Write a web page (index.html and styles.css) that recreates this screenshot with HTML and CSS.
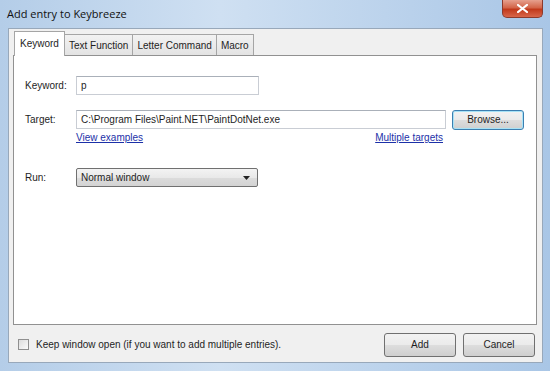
FILE: index.html
```html
<!DOCTYPE html>
<html lang="en">
<head>
    <meta charset="UTF-8">
    <title>Add entry to Keybreeze</title>
    <link rel="stylesheet" href="styles.css">
</head>
<body>
    <div class="window">
        <div class="titlebar">
            <span class="title">Add entry to Keybreeze</span>
            <div class="close-btn">
                <svg width="11" height="9" viewBox="0 0 11 9"><path d="M1 1 L10 8 M10 1 L1 8" stroke="#fff" stroke-width="2.2" stroke-linecap="square"/></svg>
            </div>
        </div>
        <div class="client">
            <div class="tabs">
                <div class="tab active">Keyword</div>
                <div class="tab">Text Function</div>
                <div class="tab">Letter Command</div>
                <div class="tab">Macro</div>
            </div>
            <div class="panel">
                <div class="row">
                    <label class="label">Keyword:</label>
                    <div class="field field-short">p</div>
                </div>
                <div class="row row-target">
                    <label class="label">Target:</label>
                    <div class="field field-long">C:\Program Files\Paint.NET\PaintDotNet.exe</div>
                    <div class="btn btn-default">Browse...</div>
                </div>
                <div class="links">
                    <a href="#">View examples</a>
                    <a href="#">Multiple targets</a>
                </div>
                <div class="row row-run">
                    <label class="label">Run:</label>
                    <div class="select">
                        <span>Normal window</span>
                        <svg width="7" height="4" viewBox="0 0 7 4"><path d="M0 0 H7 L3.5 4 Z" fill="#222"/></svg>
                    </div>
                </div>
            </div>
            <div class="footer">
                <label class="check"><span class="box"></span>Keep window open (if you want to add multiple entries).</label>
                <div class="actions">
                    <div class="btn btn-big">Add</div>
                    <div class="btn btn-big">Cancel</div>
                </div>
            </div>
        </div>
    </div>
</body>
</html>
```

FILE: styles.css
```css
body {
    margin: 0;
    font-family: 'Liberation Sans', Arial, sans-serif;
    font-size: 10px;
    color: #1e1e1e;
}

.window {
    width: 550px;
    height: 371px;
    box-sizing: border-box;
    padding: 0 7px 8px 8px;
    display: flex;
    flex-direction: column;
    background: linear-gradient(90deg, #b4cde8 0%, #cfe0f2 40%, #bcd3ec 70%, #a9c6e6 100%);
}

.titlebar {
    height: 28px;
    flex: none;
    display: flex;
    align-items: flex-start;
    justify-content: space-between;
}

.title {
    font-family: 'Open Sans', 'Liberation Sans', sans-serif;
    font-size: 11px;
    color: #111;
    margin-top: 6px;
    margin-left: -1px;
}

.close-btn {
    width: 41px;
    height: 18px;
    border: 1px solid #8c3a2c;
    border-top: none;
    border-radius: 0 0 5px 5px;
    box-sizing: border-box;
    background: linear-gradient(180deg, #e6a08e 0%, #d36549 45%, #c1391b 55%, #d8664a 100%);
    display: flex;
    align-items: center;
    justify-content: center;
}

.client {
    flex: 1;
    background: #f0f0f0;
    border: 1px solid #98a8ba;
    display: flex;
    flex-direction: column;
    padding: 1px 5px 0 4px;
}

.tabs {
    display: flex;
    align-items: flex-end;
    margin-left: 1px;
    height: 25px;
    position: relative;
    z-index: 1;
}

.tab {
    height: 21px;
    padding: 0 4px;
    line-height: 21px;
    border: 1px solid #a5a5a5;
    border-bottom: none;
    border-left: none;
    background: linear-gradient(180deg, #f2f2f2, #e3e3e3);
    box-sizing: border-box;
}

.tab.active {
    height: 25px;
    line-height: 24px;
    background: #fff;
    border-left: 1px solid #a5a5a5;
    padding: 0 5px;
    margin-bottom: -1px;
}

.panel {
    height: 270px;
    background: #fff;
    border: 1px solid #919191;
    box-sizing: border-box;
    padding: 20px 0 0 11px;
}

.row {
    display: flex;
    align-items: center;
    height: 19px;
}

.label {
    width: 51px;
    flex: none;
}

.field {
    height: 19px;
    box-sizing: border-box;
    border: 1px solid #c9cdd4;
    border-top-color: #aab0b9;
    padding: 0 4px;
    line-height: 17px;
}

.field-short {
    width: 183px;
}

.field-long {
    width: 370px;
}

.row-target {
    margin-top: 15px;
}

.btn {
    height: 20px;
    box-sizing: border-box;
    border: 1px solid #707070;
    border-radius: 3px;
    background: linear-gradient(180deg, #f2f2f2 0%, #ebebeb 48%, #dddddd 52%, #cfcfcf 100%);
    display: flex;
    align-items: center;
    justify-content: center;
}

.btn-default {
    width: 72px;
    margin-left: 6px;
    border: 1px solid #3c7fb1;
    box-shadow: inset 0 0 0 1px #a7e2f6;
}

.links {
    display: flex;
    justify-content: space-between;
    width: 367px;
    margin: 3px 0 0 51px;
}

.links a {
    color: #1c31a8;
}

.row-run {
    margin-top: 25px;
}

.select {
    width: 182px;
    height: 19px;
    box-sizing: border-box;
    border: 1px solid #707070;
    border-radius: 2px;
    background: linear-gradient(180deg, #f3f3f3 0%, #e9e9e9 50%, #dcdcdc 51%, #d3d3d3 100%);
    display: flex;
    align-items: center;
    justify-content: space-between;
    padding: 0 7px 0 4px;
}

.footer {
    flex: 1;
    display: flex;
    align-items: center;
    justify-content: space-between;
    padding: 0 2px 0 5px;
}

.check {
    display: flex;
    align-items: center;
    margin-top: 2px;
}

.box {
    width: 11px;
    height: 11px;
    box-sizing: border-box;
    border: 1px solid #8f8f8f;
    background: linear-gradient(135deg, #dcdcdc, #fbfbfb);
    margin-right: 7px;
}

.actions {
    display: flex;
    gap: 7px;
    margin-top: 2px;
}

.btn-big {
    width: 72px;
    height: 24px;
}
```
